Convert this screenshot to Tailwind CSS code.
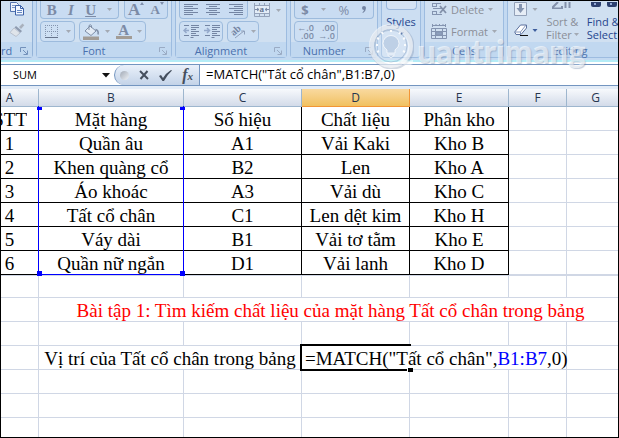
<!DOCTYPE html>
<html lang="vi">
<head>
<meta charset="utf-8">
<meta name="viewport" content="width=device-width, initial-scale=1">
<title>Bảng tính</title>
<script src="https://cdn.jsdelivr.net/npm/@tailwindcss/browser@4"></script>
</head>
<body class="min-h-screen flex flex-col bg-white border border-black overflow-hidden font-['Open_Sans','Noto_Sans',sans-serif]">

<!-- Ribbon -->
<header class="relative flex items-start gap-[3px] bg-[#c3d9f1] border-b-2 border-[#b4ecf6] pb-[2px] overflow-hidden text-[11px] leading-[13px] text-[#8b8f98]">

  <!-- Clipboard -->
  <section class="w-[32px] shrink-0 h-[57px] flex flex-col border-r border-b border-[#93b3d8] rounded-br bg-[#d0e0f1]">
    <div class="flex-1 flex flex-col items-center pl-[1px] gap-[7px]">
      <button aria-label="Copy"><svg class="block" width="18" height="15" viewBox="0 0 18 15"><path d="M2.500 1.500h6l2 2v7h-8z" fill="#eef4fc" stroke="#5575b0"/><path d="M4 4.500h4M4 6.500h4" stroke="#7d97c6"/><path d="M7.500 4.500h5l3 3v6.500h-8z" fill="#f2f7ff" stroke="#3d62a8"/><path d="M12.500 4.500v3h3" fill="none" stroke="#3d62a8"/><path d="M9 9.500h5M9 11.500h5" stroke="#6587c2"/></svg></button>
      <button aria-label="Format Painter"><svg class="block" width="16" height="14" viewBox="0 0 16 14"><path d="M10 4l3.500-3.500 1.800 1.800L12 6z" fill="#a9b1bd"/><path d="M7 3l6 5-1.500 1.800-6-5.300z" fill="#8e9bb0"/><path d="M5 5l6 5-4 3.500-6-4z" fill="#dfe4ea" stroke="#b2bac6" stroke-width=".8"/></svg></button>
    </div>
    <div class="h-[15px] flex items-center justify-between pt-[2px] pr-1 bg-[#c1d8f0] text-[#4a70ae]"><span>rd</span>
      <svg width="8" height="8" viewBox="0 0 8 8" fill="none" stroke="#7391bb"><path d="M.5 5V.5H6M3 3l4 4M7.500 3.500v4h-4"/></svg></div>
  </section>

  <!-- Font -->
  <section class="w-[136px] shrink-0 h-[57px] flex flex-col border border-t-0 border-[#9dbce0] rounded-b bg-[#d0e0f1]">
    <div class="flex-1 flex flex-col gap-[2px] px-[3px]">
      <div class="flex gap-[5px]">
        <div class="w-[79px] h-[18px] flex items-center justify-around rounded-b border border-t-0 border-[#9dbbdd] bg-[#c9dcf2] font-['Liberation_Serif',serif] text-[15px] leading-[16px] text-[#7c8ba6]">
          <button class="font-bold" aria-label="Bold">B</button>
          <button class="italic font-bold" aria-label="Italic">I</button>
          <button class="underline font-bold" aria-label="Underline">U</button>
          <svg width="5" height="3" viewBox="0 0 5 3"><path d="M0 0h5L2.500 3z" fill="#a3a9b3"/></svg>
        </div>
        <div class="w-[44px] h-[18px] flex items-center justify-around rounded-b border border-t-0 border-[#9dbbdd] bg-[#c9dcf2] font-['Liberation_Serif',serif] font-bold leading-[16px] text-[#7c8ba6]">
          <button class="flex text-[17px]" aria-label="Grow Font">A<svg width="4" height="3" viewBox="0 0 4 3"><path d="M0 3h4L2 0z" fill="#8190ad"/></svg></button>
          <button class="flex text-[13px]" aria-label="Shrink Font">A<svg width="4" height="3" viewBox="0 0 4 3"><path d="M0 0h4L2 3z" fill="#8190ad"/></svg></button>
        </div>
      </div>
      <div class="flex gap-1">
        <div class="w-[35px] h-[21px] flex items-center justify-around rounded border border-[#9dbbdd] bg-[#cddff3]">
          <button aria-label="Borders"><svg class="block" width="14" height="14" viewBox="0 0 14 14" fill="none" stroke="#8494ae"><path d="M.5 0v12M6.500 0v12M12.500 0v12M0 .5h13M0 6.500h13" stroke-dasharray="1 1"/><path d="M0 12.500h13" stroke="#66748c"/></svg></button>
          <svg width="5" height="3" viewBox="0 0 5 3"><path d="M0 0h5L2.500 3z" fill="#a3a9b3"/></svg>
        </div>
        <div class="w-[67px] h-[21px] flex items-center justify-around rounded border border-[#9dbbdd] bg-[#cddff3]">
          <button aria-label="Fill Color"><svg class="block" width="17" height="16" viewBox="0 0 17 16"><path d="M7 2l6 5-5 4.500-6-4.500z" fill="#e3ebf5" stroke="#7f8ea6"/><path d="M6 6V1.500q1.500-1.500 2.500 0V4" fill="none" stroke="#7f8ea6"/><path d="M12.500 5.500q3.500 1 2.500 5" fill="none" stroke="#7f8ea6" stroke-width="1.500"/><path d="M0 12.500h16v3.500H0z" fill="#a29c96"/></svg></button>
          <svg width="5" height="3" viewBox="0 0 5 3"><path d="M0 0h5L2.500 3z" fill="#a3a9b3"/></svg>
          <button class="w-4 flex flex-col items-center font-['Liberation_Serif',serif] font-bold text-[15px] leading-[12px] text-[#7c8ba6]" aria-label="Font Color">A<span class="w-4 h-[3px] bg-[#a29c96]"></span></button>
          <svg width="5" height="3" viewBox="0 0 5 3"><path d="M0 0h5L2.500 3z" fill="#a3a9b3"/></svg>
        </div>
      </div>
    </div>
    <div class="h-[15px] flex items-center pt-[2px] pr-1 bg-[#c1d8f0] text-[#4a70ae]"><span class="flex-1 text-center pr-2">Font</span>
      <svg width="8" height="8" viewBox="0 0 8 8" fill="none" stroke="#9aabc4"><path d="M.5 5V.5H6M3 3l4 4M7.500 3.500v4h-4"/></svg></div>
  </section>

  <!-- Alignment -->
  <section class="w-[112px] shrink-0 h-[57px] flex flex-col border border-t-0 border-[#9dbce0] rounded-b bg-[#d0e0f1]">
    <div class="flex-1 flex flex-col gap-[2px] px-[3px]">
      <div class="flex items-center gap-[6px]">
        <div class="w-[69px] h-[18px] flex items-center justify-around rounded-b border border-t-0 border-[#9dbbdd] bg-[#c9dcf2]">
          <button aria-label="Align Left"><svg class="block" width="14" height="12" viewBox="0 0 14 12" stroke="#7485a3"><path d="M0 .5h14M0 2.500h9M0 4.500h14M0 6.500h9M0 8.500h14M0 10.500h9"/></svg></button>
          <button aria-label="Center"><svg class="block" width="14" height="12" viewBox="0 0 14 12" stroke="#7485a3"><path d="M0 .5h14M3 2.500h8M0 4.500h14M3 6.500h8M0 8.500h14M3 10.500h8"/></svg></button>
          <button aria-label="Align Right"><svg class="block" width="14" height="12" viewBox="0 0 14 12" stroke="#7485a3"><path d="M0 .5h14M5 2.500h9M0 4.500h14M5 6.500h9M0 8.500h14M5 10.500h9"/></svg></button>
        </div>
        <button aria-label="Merge and Center"><svg class="block" width="16" height="14" viewBox="0 0 16 14"><path d="M.5 0v13.500h15V0M5.500 0v2.500M10.500 0v2.500M0 2.500h16M0 10.500h16M5.500 10.500v3M10.500 10.500v3" fill="none" stroke="#95a3ba"/><path d="M1 3h14v7H1z" fill="#e4edf7"/><path d="M1 6.500h4M15 6.500h-4M3 5l2 1.500L3 8M13 5l-2 1.500 2 1.500" fill="none" stroke="#7a8aa6"/><text x="5.500" y="9" font-family="Liberation Serif" font-size="9" font-weight="bold" fill="#66758f">a</text></svg></button>
        <svg width="5" height="3" viewBox="0 0 5 3"><path d="M0 0h5L2.500 3z" fill="#a3a9b3"/></svg>
      </div>
      <div class="flex gap-1">
        <div class="w-[44px] h-[21px] flex items-center justify-around rounded border border-[#9dbbdd] bg-[#cddff3]">
          <button aria-label="Decrease Indent"><svg class="block" width="16" height="13" viewBox="0 0 16 13" fill="none" stroke="#7485a3"><path d="M1 .5h5M8 .5h8M8 2.500h8M8 4.500h5M8 6.500h8M8 8.500h5M1 10.500h5M8 10.500h8M7.500 12.500h3"/><path d="M6 5.500H1M3.500 3L1 5.500 3.500 8" stroke="#94a9cb" stroke-width="1.500"/></svg></button>
          <button aria-label="Increase Indent"><svg class="block" width="16" height="13" viewBox="0 0 16 13" fill="none" stroke="#7485a3"><path d="M1 .5h5M8 .5h8M8 2.500h8M8 4.500h5M8 6.500h8M8 8.500h5M1 10.500h5M8 10.500h8M7.500 12.500h3"/><path d="M0 5.500h5M3 3l2.500 2.500L3 8" stroke="#94a9cb" stroke-width="1.500"/></svg></button>
        </div>
        <div class="w-[32px] h-[21px] flex items-center justify-around rounded border border-[#9dbbdd] bg-[#cddff3]">
          <button aria-label="Orientation"><svg class="block" width="16" height="15" viewBox="0 0 16 15"><text x="1" y="11" transform="rotate(-42 4 8)" font-family="Liberation Serif" font-size="10" font-weight="bold" fill="#7485a3">ab</text><path d="M5 14l9-7M11 7h3.500v3.500" fill="none" stroke="#8fa0bb"/></svg></button>
          <svg width="5" height="3" viewBox="0 0 5 3"><path d="M0 0h5L2.500 3z" fill="#a3a9b3"/></svg>
        </div>
      </div>
    </div>
    <div class="h-[15px] flex items-center pt-[2px] pr-1 bg-[#c1d8f0] text-[#4a70ae]"><span class="flex-1 text-center pr-2">Alignment</span>
      <svg width="8" height="8" viewBox="0 0 8 8" fill="none" stroke="#9aabc4"><path d="M.5 5V.5H6M3 3l4 4M7.500 3.500v4h-4"/></svg></div>
  </section>

  <!-- Number -->
  <section class="w-[88px] shrink-0 h-[57px] flex flex-col border border-t-0 border-[#9dbce0] rounded-b bg-[#d0e0f1]">
    <div class="flex-1 flex flex-col gap-[2px] px-[3px]">
      <div class="w-[80px] h-[18px] flex items-center justify-around rounded-b border border-t-0 border-[#9dbbdd] bg-[#c9dcf2] text-[13px] leading-[14px] text-[#7c8ba6]">
        <button class="font-bold" aria-label="Currency">$</button>
        <svg width="5" height="3" viewBox="0 0 5 3"><path d="M0 0h5L2.500 3z" fill="#a3a9b3"/></svg>
        <button aria-label="Percent">%</button>
        <button aria-label="Comma"><svg class="block" width="5" height="8" viewBox="0 0 5 8"><path d="M0 2a2 2 0 014 0q0 3-3 5l-.6-.6Q2 5 2 4 0 4 0 2z" fill="#7485a3"/></svg></button>
      </div>
      <div class="w-[44px] h-[21px] flex items-center justify-around rounded border border-[#9dbbdd] bg-[#cddff3] text-[9px] leading-[8px] font-semibold text-[#7c8ba6]">
        <button class="text-right" aria-label="Increase Decimal">←.0<br>.00</button>
        <button class="text-right" aria-label="Decrease Decimal">.00<br>→.0</button>
      </div>
    </div>
    <div class="h-[15px] flex items-center pt-[2px] pr-1 bg-[#c1d8f0] text-[#4a70ae]"><span class="flex-1 text-center pr-2">Number</span>
      <svg width="8" height="8" viewBox="0 0 8 8" fill="none" stroke="#9aabc4"><path d="M.5 5V.5H6M3 3l4 4M7.500 3.500v4h-4"/></svg></div>
  </section>

  <!-- Styles -->
  <section class="w-[40px] shrink-0 h-[57px] border border-t-0 border-[#9dbce0] rounded-b bg-[#ccdef2] text-[#26468e]">
    <button class="w-full flex flex-col items-center">
      <span class="w-[31px] h-[9px] rounded-b border border-t-0 border-[#9bb8dc] bg-[#d5e3f4]"></span>
      <span class="mt-[5px]">Styles</span>
      <svg class="mt-1" width="5" height="3" viewBox="0 0 5 3"><path d="M0 0h5L2.500 3z" fill="#5372a8"/></svg>
    </button>
  </section>

  <!-- Cells -->
  <section class="w-[80px] shrink-0 h-[57px] flex flex-col border border-t-0 border-[#9dbce0] rounded-b bg-[#d0e0f1]">
    <div class="flex-1 flex flex-col gap-[7px] pl-[6px] pt-[1px]">
      <button class="flex items-center gap-1"><svg width="16" height="15" viewBox="0 0 16 15" fill="none" stroke="#8494b0"><path d="M1 1.500h9M1 4.500h5M2 6.500h9M1 9.500h5M1 12.500h10M1.500 1v3M5.500 1v3M1.500 9v4M5.500 9v4"/><path d="M9 4l6 7M15 4l-6 7" stroke="#8290a9" stroke-width="1.800"/></svg>Delete<svg width="5" height="3" viewBox="0 0 5 3"><path d="M0 0h5L2.500 3z" fill="#a3a9b3"/></svg></button>
      <button class="flex items-center gap-1"><svg width="16" height="15" viewBox="0 0 16 15" fill="none" stroke="#8494b0"><path d="M1 1.500h14M1.500 0v3M14.500 0v3M5 0v2M8.500 0v2M12 0v2M.5 4.500h15v10H.5zM0 7.500h16M0 11.500h16M4.500 4v11M11.500 4v11"/><path d="M5 8h6v3H5z" fill="#8da0be"/></svg>Format<svg width="5" height="3" viewBox="0 0 5 3"><path d="M0 0h5L2.500 3z" fill="#a3a9b3"/></svg></button>
    </div>
    <div class="h-[15px] flex items-center justify-center pt-[2px] bg-[#c1d8f0] text-[#4a70ae]">Cells</div>
  </section>

  <!-- Editing -->
  <section class="flex-1 min-w-[108px] h-[57px] flex flex-col border-l border-b border-[#9dbce0] rounded-bl bg-[#d0e0f1]">
    <div class="flex-1 flex pl-[6px] pt-[1px] gap-[8px]">
      <div class="shrink-0 flex flex-col gap-[8px]">
        <button class="flex items-center gap-1" aria-label="Fill"><svg width="14" height="14" viewBox="0 0 14 14"><path d="M.5.5h12v13H.5z" fill="#e6edf6" stroke="#93a1b8"/><path d="M5 2h3v4h2.500L6.500 11 2.500 6H5z" fill="#8595b0"/></svg><svg width="6" height="3" viewBox="0 0 5 3"><path d="M0 0h5L2.500 3z" fill="#a3a9b3"/></svg></button>
        <button class="flex items-center gap-1" aria-label="Clear"><svg width="14" height="13" viewBox="0 0 14 13"><path d="M6.500 1h6v3L7 10.500H2L.7 8z" fill="#fff" stroke="#5a6f9c"/><path d="M1 8h5.500l5.500-7M6.500 8v2.500" fill="none" stroke="#8598bd"/><path d="M6 11.500h8" stroke="#111"/></svg><svg width="6" height="3" viewBox="0 0 5 3"><path d="M0 0h5L2.500 3z" fill="#3d5d9d"/></svg></button>
      </div>
      <button class="shrink-0 flex flex-col items-center">
        <svg width="22" height="7" viewBox="0 0 22 7"><path d="M7 0L2 5v1.500h9V4M14.500 0v6M18.500 0v6" fill="none" stroke="#8391ab" stroke-width="2"/></svg>
        <span class="mt-[6px]">Sort &amp;</span>
        <span class="flex items-center gap-[2px]">Filter<svg width="5" height="3" viewBox="0 0 5 3"><path d="M0 0h5L2.500 3z" fill="#a3a9b3"/></svg></span>
      </button>
      <button class="shrink-0 flex flex-col items-start text-[#26468e]">
        <svg class="ml-1" width="26" height="6" viewBox="0 0 26 6"><path d="M0 0h10v3q0 2-2 2H2Q0 5 0 3zM16 0h10v3q0 2-2 2h-6q-2 0-2-2z" fill="#2c406f"/><path d="M3 1h2v2H3zM19 1h2v2h-2z" fill="#93a9d6"/></svg>
        <span class="mt-[7px]">Find &amp;</span>
        <span>Select</span>
      </button>
    </div>
    <div class="h-[15px] flex items-center justify-center pt-[2px] pl-[14px] bg-[#c1d8f0] text-[#4a70ae]">Editing</div>
  </section>
</header>

<!-- Formula bar -->
<div class="flex border-t border-b border-[#7395c0] mt-[2px] h-[22px] text-[13px] text-black bg-white">
  <input id="namebox" aria-label="Name box" value="SUM" class="w-[97px] pl-[12px] text-[11px] outline-none">
  <button class="w-[16px] pl-[4px] flex items-center" aria-label="Names"><svg width="8" height="5" viewBox="0 0 8 5"><path d="M0 0h8L4 4.500z" fill="#111"/></svg></button>
  <div class="w-[86px] flex items-center justify-between pl-[5px] pr-[6px] rounded-l-full border-l border-r border-[#7395c0] bg-linear-to-b from-[#eaf1fa] to-[#c3d3e8]">
    <span class="w-[9px] h-[9px] rounded-full bg-linear-to-br from-[#a2aab6] to-[#eef2f7]"></span>
    <button aria-label="Cancel"><svg class="block" width="10" height="10" viewBox="0 0 10 10"><path d="M1 1l8 8M8.500 1L1.500 9" stroke="#454f5e" stroke-width="2" fill="none"/></svg></button>
    <button aria-label="Enter"><svg class="block" width="13" height="11" viewBox="0 0 13 11"><path d="M0 6l2-1 2 3Q7 3 12 0l1 .5Q8 5 5 11H3.500z" fill="#454f5e"/></svg></button>
    <button class="font-['Liberation_Serif',serif] italic font-bold text-[16px] leading-4 text-[#454f5e]" aria-label="Insert Function">f<span class="text-[11px]">x</span></button>
  </div>
  <input id="formula" aria-label="Formula" value='=MATCH("Tất cổ chân",B1:B7,0)' class="flex-1 min-w-0 pl-[6px] outline-none">
</div>

<!-- Worksheet -->
<main class="relative flex-1 flex flex-col pt-[3px] bg-[#e3ecf7]">
  <table class="w-full table-fixed border-separate border-spacing-0 bg-white text-center font-['Liberation_Serif',serif] text-[19px] leading-[21px] text-black whitespace-nowrap">
    <colgroup><col class="w-[38px]"><col class="w-[145px]"><col class="w-[118px]"><col class="w-[108px]"><col class="w-[99px]"><col class="w-[58px]"><col></colgroup>
    <thead class="font-['Open_Sans','Noto_Sans',sans-serif] text-[12px] leading-[17px] text-[#27364f]">
      <tr class="[&>th]:h-[18px] [&>th]:p-0 [&>th]:font-normal [&>th]:border-r [&>th]:border-b [&>th]:border-[#9eb6ce]">
        <th class="bg-linear-to-b from-[#f7f9fc] to-[#d3dbe9]"><span class="pr-5">A</span></th>
        <th class="bg-linear-to-b from-[#f7f9fc] to-[#d3dbe9]">B</th>
        <th class="bg-linear-to-b from-[#f7f9fc] to-[#d3dbe9]">C</th>
        <th class="bg-linear-to-b from-[#f9d99f] to-[#f1c15f] border-[#f29536]!">D</th>
        <th class="bg-linear-to-b from-[#f7f9fc] to-[#d3dbe9]">E</th>
        <th class="bg-linear-to-b from-[#f7f9fc] to-[#d3dbe9]">F</th>
        <th class="bg-linear-to-b from-[#f7f9fc] to-[#d3dbe9] border-r-0!"><span class="pl-[6px]">G</span></th>
      </tr>
    </thead>
    <tbody class="[&_td]:h-6 [&_td]:p-0 [&_td]:pt-[2px] [&_td]:border-r [&_td]:border-b [&_td]:border-black [&_td:nth-child(n+6)]:border-[#d0d7e5] [&_td:last-child]:border-r-0 [&_td:first-child]:pr-[20px]">
      <tr><td><div class="flex justify-end overflow-hidden w-[26px]">STT</div></td><td>Mặt hàng</td><td>Số hiệu</td><td>Chất liệu</td><td>Phân kho</td><td></td><td></td></tr>
      <tr><td>1</td><td>Quần âu</td><td>A1</td><td>Vải Kaki</td><td>Kho B</td><td></td><td></td></tr>
      <tr><td>2</td><td>Khen quàng cổ</td><td>B2</td><td>Len</td><td>Kho A</td><td></td><td></td></tr>
      <tr><td>3</td><td>Áo khoác</td><td>A3</td><td>Vải dù</td><td>Kho C</td><td></td><td></td></tr>
      <tr><td>4</td><td>Tất cổ chân</td><td>C1</td><td>Len dệt kim</td><td>Kho H</td><td></td><td></td></tr>
      <tr><td>5</td><td>Váy dài</td><td>B1</td><td>Vải tơ tằm</td><td>Kho E</td><td></td><td></td></tr>
      <tr><td>6</td><td>Quần nữ ngắn</td><td>D1</td><td>Vải lanh</td><td>Kho D</td><td></td><td></td></tr>
    </tbody>
    <tbody class="[&_td]:h-6 [&_td]:p-0 [&_td]:pt-[2px] [&_td]:border-r [&_td]:border-b [&_td]:border-[#d0d7e5] [&_td:last-child]:border-r-0">
      <tr class="[&>td]:h-[23px]! [&>td]:border-t"><td></td><td></td><td></td><td></td><td></td><td></td><td></td></tr>
      <tr><td></td><td colspan="6" class="text-[#ff0000]"><span class="pl-1">Bài tập 1: Tìm kiếm chất liệu của mặt hàng Tất cổ chân trong bảng</span></td></tr>
      <tr><td></td><td></td><td></td><td></td><td></td><td></td><td></td></tr>
      <tr><td></td><td colspan="2">Vị trí của Tất cổ chân trong bảng</td>
        <td colspan="3" class="relative text-left">
          <span class="absolute -left-[2px] -top-[2px] w-[111px] h-[27px] border-2 border-black border-r-0"></span>
          <span class="absolute left-[105px] top-[22px] w-[6px] h-[4px] border-l border-white bg-black"></span>
          <span class="relative pl-[3px]">=MATCH("Tất cổ chân",<span class="text-[#0000ff]">B1:B7</span>,0)</span>
        </td><td></td></tr>
      <tr><td></td><td></td><td></td><td></td><td></td><td></td><td></td></tr>
      <tr><td></td><td></td><td></td><td></td><td></td><td></td><td></td></tr>
      <tr class="[&>td]:h-[19px]! [&>td]:border-b-0!"><td></td><td></td><td></td><td></td><td></td><td></td><td></td></tr>
    </tbody>
  </table>
  <!-- Referenced range B1:B7 -->
  <div class="absolute left-[37px] top-[20px] w-[146px] h-[169px] border border-t-0 border-[#0000ff]">
    <span class="absolute -left-[2px] top-[1px] w-[5px] h-[3px] bg-[#0000ff]"></span>
    <span class="absolute -right-[2px] top-[1px] w-[5px] h-[3px] bg-[#0000ff]"></span>
    <span class="absolute -left-[2px] -bottom-[2px] size-[5px] bg-[#0000ff]"></span>
    <span class="absolute -right-[2px] -bottom-[2px] size-[5px] bg-[#0000ff]"></span>
  </div>
</main>

<!-- Watermark -->
<div class="pointer-events-none absolute left-[369px] top-[22px] flex items-center gap-[3px] text-white/60">
  <svg width="45" height="45" viewBox="0 0 45 45" fill="none">
    <circle cx="23" cy="23" r="20" stroke="#7f93ae" stroke-opacity=".35" stroke-width="5"/>
    <circle cx="22" cy="22" r="19.500" stroke="#fff" stroke-opacity=".6" stroke-width="5"/>
    <path d="M34 35q5 3 10 1v4q-8 4-13-2z" fill="#fff" fill-opacity=".6"/>
    <circle cx="22" cy="22" r="16" fill="#fff" fill-opacity=".2" stroke="#8da3c2" stroke-opacity=".5"/>
    <path d="M18 26q-4-3-4-6.500a8 8 0 0116 0q0 3.500-4 6.500v3h-8zM18.500 31h7l-3.500 3z" fill="#b3c7e0" fill-opacity=".7" stroke="#fff" stroke-opacity=".7"/>
    <path d="M22 8v-2M14 10l-1.500-2M30 10l1.500-2M10 15l-2-1M34 15l2-1M9 21H7M35 21h2M10 27l-2 1M34 27l2 1" stroke="#fff" stroke-opacity=".9" stroke-width="2"/>
  </svg>
  <span class="font-['Lato',sans-serif] font-black text-[33px] leading-[40px] pt-2 text-shadow-[1px_1px_1px_#6b84a866]">uantrimang</span>
</div>
</body>
</html>
